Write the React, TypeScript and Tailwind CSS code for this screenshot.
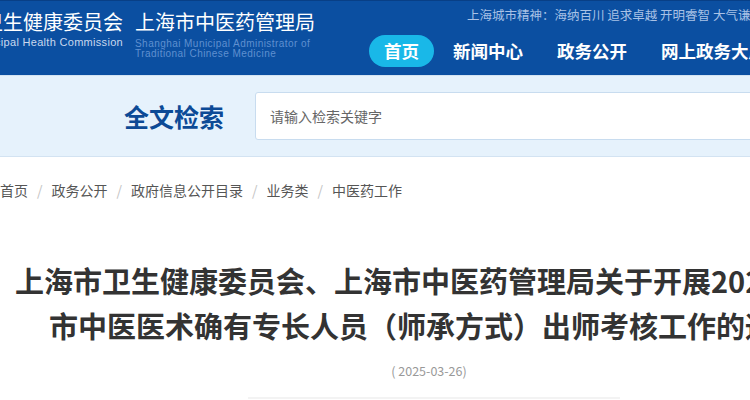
import React from "react";

const cjk = { fontFamily: '"Noto Sans CJK SC", "Noto Sans", sans-serif' };
const latin = { fontFamily: '"Liberation Sans", Arial, sans-serif' };

const navItems = ["首页", "新闻中心", "政务公开", "网上政务大厅"];
const crumbs = ["首页", "政务公开", "政府信息公开目录", "业务类", "中医药工作"];

export default function App() {
  return (
    <div className="w-[750px] h-[400px] overflow-hidden bg-white" style={cjk}>
      {/* Header */}
      <header className="h-[75px] bg-[#0b4fa1] border-t border-[#083f86] flex">
        <div className="w-[123px] shrink-0 flex flex-col items-end pt-[9px] whitespace-nowrap">
          <div className="text-[20px] leading-[24px] text-white">上海市卫生健康委员会</div>
          <div className="text-[11px] leading-[14px] mt-[1px] tracking-[0.3px] text-[#c9d8ee]" style={latin}>
            Shanghai Municipal Health Commission
          </div>
        </div>
        <div className="w-[180px] shrink-0 ml-[12px] flex flex-col pt-[9px] whitespace-nowrap">
          <div className="text-[20px] leading-[24px] text-white">上海市中医药管理局</div>
          <div
            className="text-[10px] leading-[10px] mt-[5px] tracking-[0.45px] text-[#5f8fd0]"
            style={latin}
          >
            <div>Shanghai Municipal Administrator of</div>
            <div>Traditional Chinese Medicine</div>
          </div>
        </div>
        <div className="ml-[54px] flex flex-col pt-[5px] whitespace-nowrap">
          <div className="pl-[98px] text-[12.5px] leading-[18px] text-[#a9c2e6]">
            上海城市精神：海纳百川 追求卓越 开明睿智 大气谦和
          </div>
          <nav className="mt-[11px] flex gap-[4px]">
            {navItems.map((n, i) => (
              <div
                key={n}
                className={
                  "h-[32px] px-[15px] rounded-full flex items-center text-[17.5px] font-bold text-white " +
                  (i === 0 ? "bg-[#19b8e8]" : "")
                }
              >
                {n}
              </div>
            ))}
          </nav>
        </div>
      </header>

      {/* Search band */}
      <section className="h-[82px] bg-[#e6f2fc] border-t border-b border-[#d3e3f2] flex items-center">
        <h2 className="ml-[124px] text-[25px] leading-[30px] font-bold text-[#0c4a96] whitespace-nowrap">
          全文检索
        </h2>
        <div className="ml-[31px] w-[800px] shrink-0 h-[48px] bg-white border border-[#c8dcef] rounded-[3px] flex items-center">
          <input
            className="pl-[14px] w-full bg-transparent outline-none text-[14px] text-[#333] placeholder:text-[#666]"
            placeholder="请输入检索关键字"
          />
        </div>
      </section>

      {/* Breadcrumb */}
      <div className="mt-[23px] flex items-center h-[20px] text-[14px] text-[#555] whitespace-nowrap">
        {crumbs.map((c, i) => (
          <React.Fragment key={c}>
            {i > 0 && <span className="mx-[9px] text-[#c4c4c4]">/</span>}
            <span>{c}</span>
          </React.Fragment>
        ))}
      </div>

      {/* Title */}
      <div className="w-[852px] mt-[58px] text-center whitespace-nowrap">
        <h1 className="text-[29px] leading-[45px] font-bold text-[#333]">
          <div className="pl-[15px]">上海市卫生健康委员会、上海市中医药管理局关于开展2025年上海</div>
          <div>市中医医术确有专长人员（师承方式）出师考核工作的通知</div>
        </h1>
        <div className="mt-[14px] pl-[6px] text-[12.5px] leading-[18px] text-[#999]">( 2025-03-26)</div>
        <div className="mt-[17px] ml-[248px] w-[372px] h-[2px] bg-[#f3f3f3]" />
      </div>
    </div>
  );
}
